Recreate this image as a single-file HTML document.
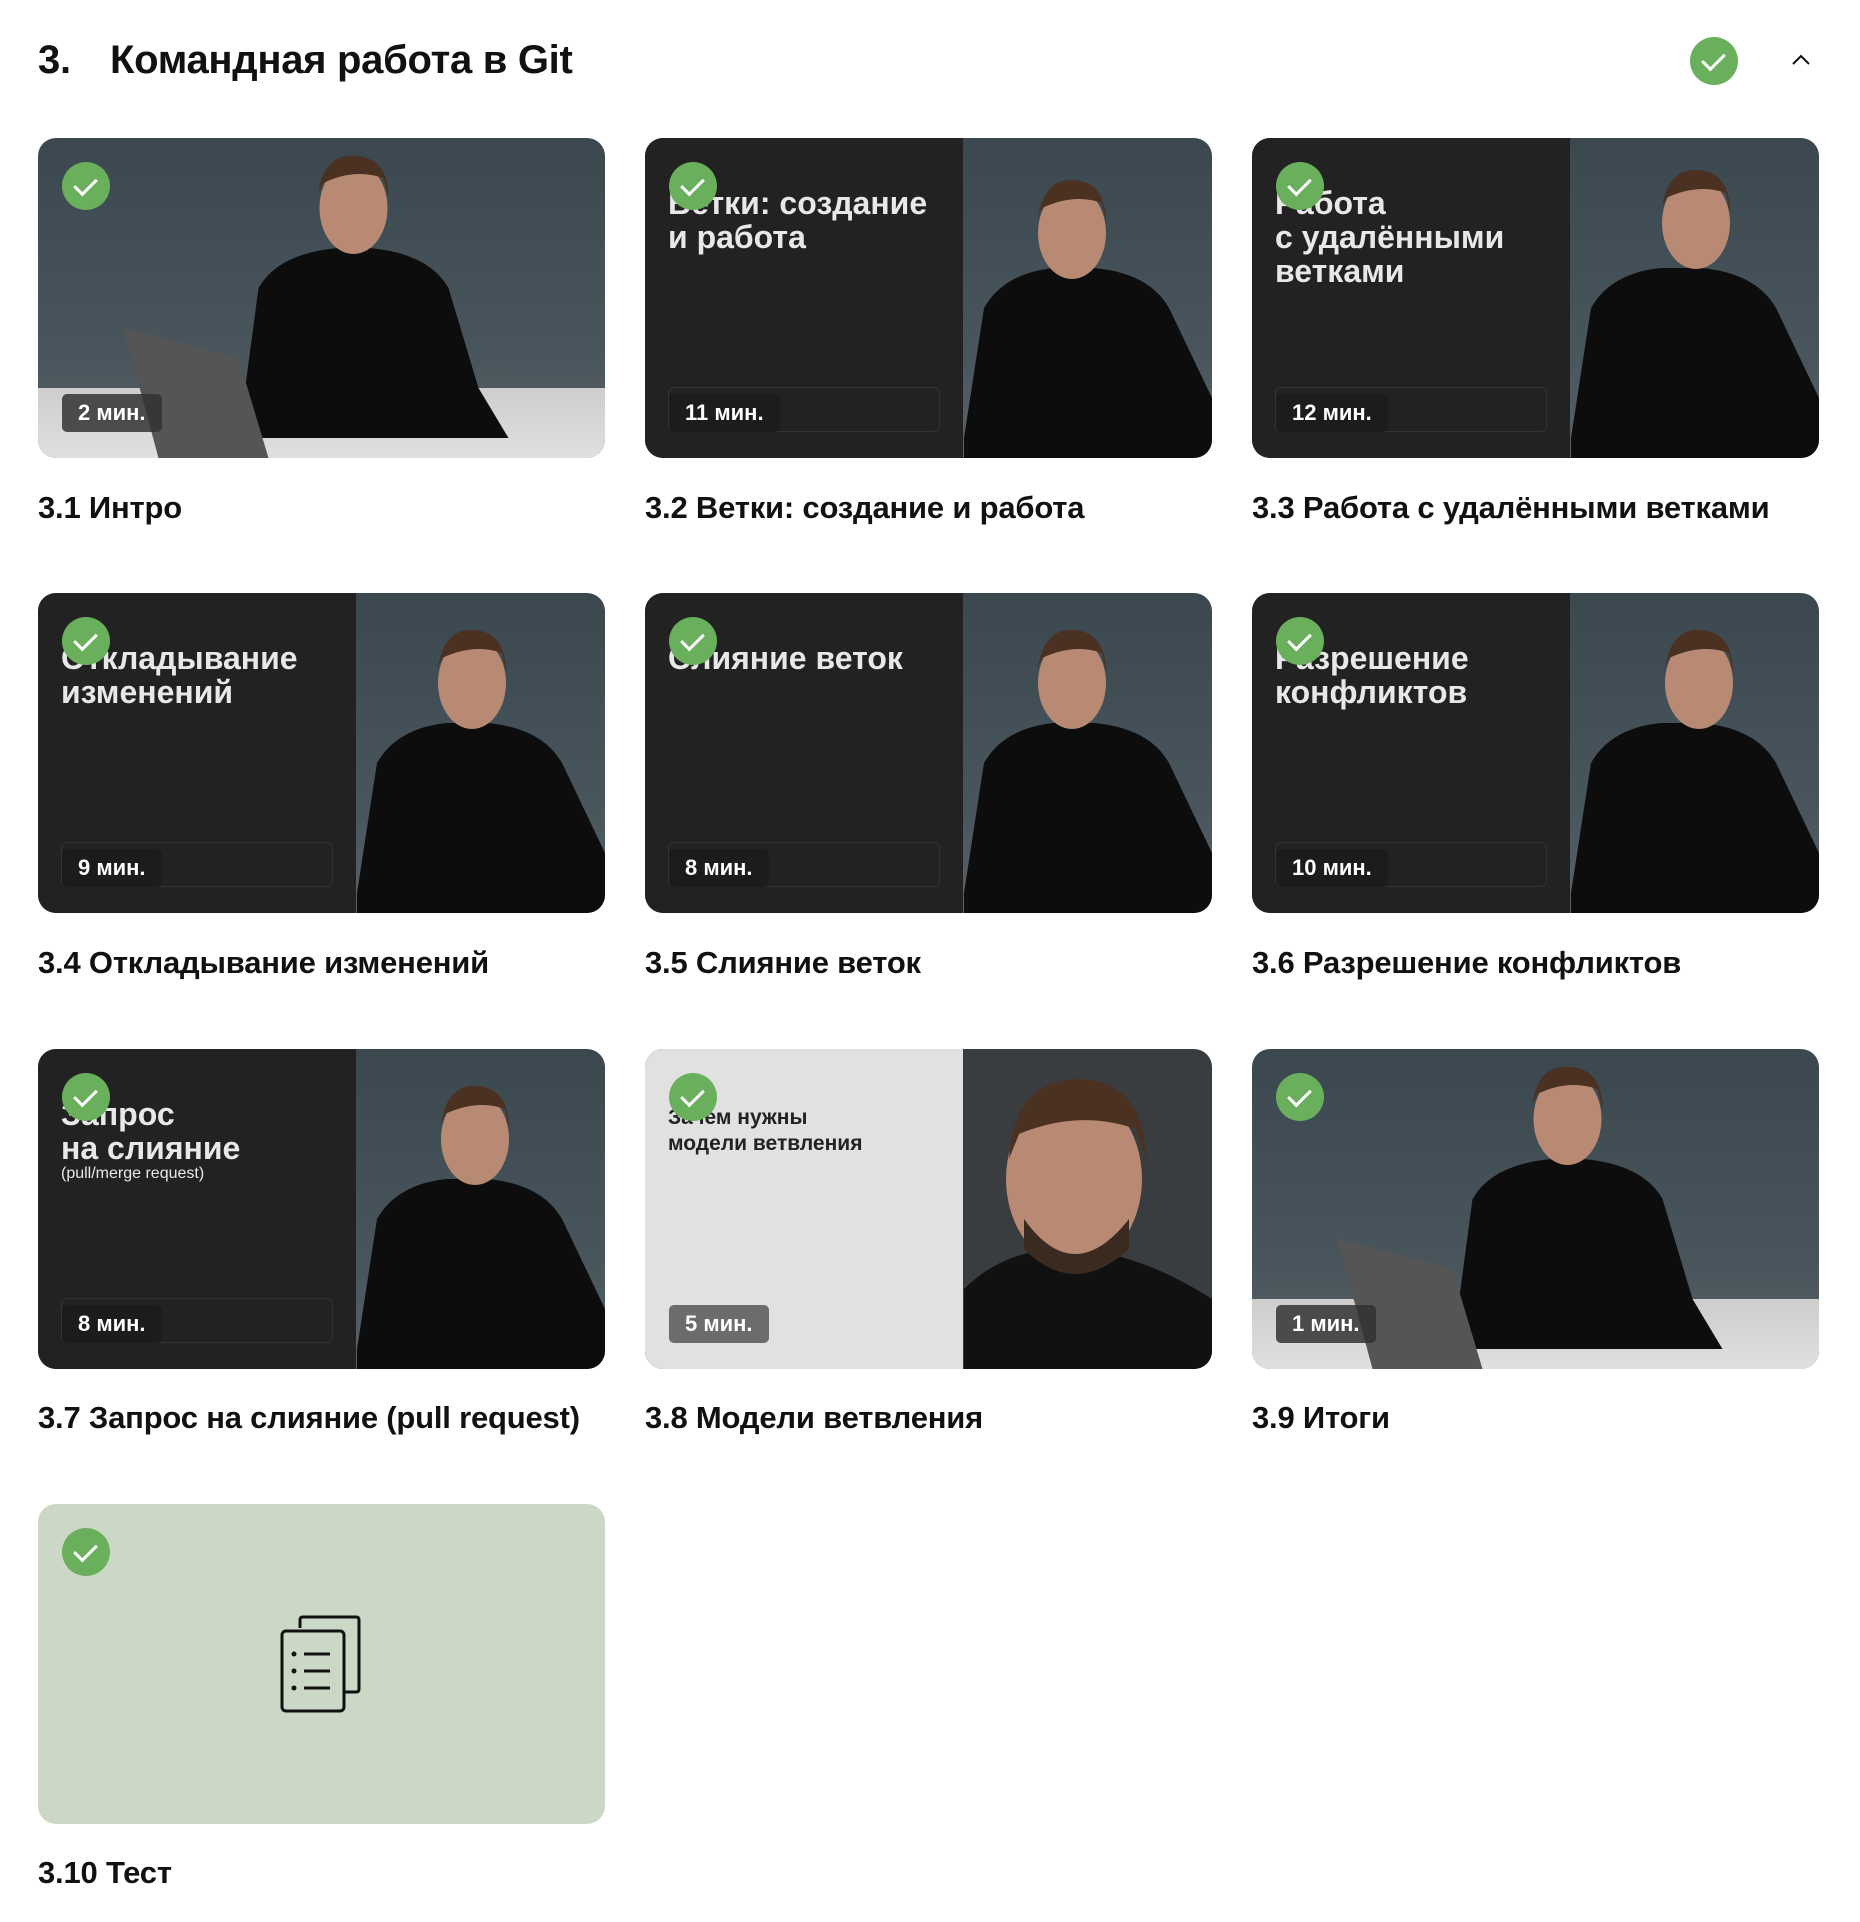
<!DOCTYPE html>
<html><head><meta charset="utf-8"><style>
*{margin:0;padding:0;box-sizing:border-box}
body{width:1860px;height:1922px;background:#fff;font-family:"Liberation Sans",sans-serif;color:#111;position:relative;overflow:hidden}
.h{position:absolute;left:38px;top:38px;font-size:40px;font-weight:700;letter-spacing:-0.3px}
.h span{display:inline-block;width:72px}
.chk{position:absolute;width:48px;height:48px;border-radius:50%;background:#6ab05c}
.chk:after{content:"";position:absolute;left:17px;top:11px;width:10px;height:19px;border:solid #fff;border-width:0 3px 3px 0;transform:rotate(45deg)}
.card{position:absolute;width:567px;height:320px;border-radius:18px;overflow:hidden;background:linear-gradient(180deg,#3c4850 0%,#4a565d 70%,#5a6368 100%)}
.card .c{left:24px;top:24px}
.left{position:absolute;left:0;top:0;width:318px;height:100%;background:#222}
.left.l{background:#e1e1e1}
.lt{position:absolute;left:23px;top:48px;color:#e8e8e8;font-size:32px;line-height:34px;font-weight:700}
.lbar{position:absolute;left:23px;top:249px;width:272px;height:45px;border:1px solid #333;border-radius:6px}
.dur{position:absolute;left:24px;top:256px;height:38px;padding:0 16px;border-radius:5px;background:rgba(50,50,50,.85);color:#fff;font-size:22px;line-height:38px;font-weight:700}
.t{position:absolute;font-size:31px;font-weight:700;letter-spacing:-0.2px}
.ph{position:absolute;top:0;right:0;height:100%}
.table{position:absolute;left:0;bottom:0;width:100%;height:70px;background:linear-gradient(#cfcdcb,#e2e0de)}
</style></head><body>
<div class="h"><span>3.</span>Командная работа в Git</div>
<div class="chk" style="left:1690px;top:37px"></div>
<svg style="position:absolute;left:1790px;top:52px" width="22" height="16"><path d="M3 12 L11 4 L19 12" stroke="#111" stroke-width="2" fill="none"/></svg>

<div class="card" style="left:38px;top:138px">
 <div class="table"></div>
 <svg class="ph" width="567" height="320" viewBox="0 0 566 320"><path d="M200 300 L220 150 Q240 115 300 110 L330 110 Q390 115 410 150 L440 250 L470 300 Z" fill="#0d0d0d"/><ellipse cx="315" cy="70" rx="34" ry="46" fill="#b88a74"/><path d="M280 55 Q285 15 318 18 Q350 20 350 60 L345 40 Q315 30 285 45Z" fill="#4a3122"/><path d="M85 190 L200 220 L230 320 L120 320 Z" fill="#555"/></svg>
 <div class="chk c"></div><div class="dur">2 мин.</div></div>
<div class="t" style="left:38px;top:490px">3.1 Интро</div>

<div class="card" style="left:645px;top:138px">
 <svg class="ph" width="248" height="320" viewBox="0 0 248 320"><path d="M0 300 L20 170 Q40 135 90 130 L130 130 Q185 135 205 170 L248 260 L248 320 L0 320Z" fill="#0d0d0d"/><ellipse cx="108" cy="95" rx="34" ry="46" fill="#b88a74"/><path d="M74 80 Q80 40 110 42 Q142 44 142 85 L138 65 Q110 55 78 70Z" fill="#4a3122"/></svg>
 <div class="left"><div class="lt">Ветки: создание<br>и работа</div><div class="lbar"></div></div>
 <div class="chk c"></div><div class="dur" style="background:#1c1c1c">11 мин.</div></div>
<div class="t" style="left:645px;top:490px">3.2 Ветки: создание и работа</div>

<div class="card" style="left:1252px;top:138px">
 <svg class="ph" width="248" height="320" viewBox="0 0 248 320"><path d="M0 300 L20 170 Q40 135 90 130 L130 130 Q185 135 205 170 L248 260 L248 320 L0 320Z" fill="#0d0d0d"/><ellipse cx="125" cy="85" rx="34" ry="46" fill="#b88a74"/><path d="M91 70 Q97 30 127 32 Q159 34 159 75 L155 55 Q127 45 95 60Z" fill="#4a3122"/></svg>
 <div class="left"><div class="lt">Работа<br>с удалёнными<br>ветками</div><div class="lbar"></div></div>
 <div class="chk c"></div><div class="dur" style="background:#1c1c1c">12 мин.</div></div>
<div class="t" style="left:1252px;top:490px">3.3 Работа с удалёнными ветками</div>

<div class="card" style="left:38px;top:593px">
 <svg class="ph" width="248" height="320" viewBox="0 0 248 320"><path d="M0 300 L20 170 Q40 135 90 130 L130 130 Q185 135 205 170 L248 260 L248 320 L0 320Z" fill="#0d0d0d"/><ellipse cx="115" cy="90" rx="34" ry="46" fill="#b88a74"/><path d="M81 75 Q87 35 117 37 Q149 39 149 80 L145 60 Q117 50 85 65Z" fill="#4a3122"/></svg>
 <div class="left"><div class="lt">Откладывание<br>изменений</div><div class="lbar"></div></div>
 <div class="chk c"></div><div class="dur" style="background:#1c1c1c">9 мин.</div></div>
<div class="t" style="left:38px;top:945px">3.4 Откладывание изменений</div>

<div class="card" style="left:645px;top:593px">
 <svg class="ph" width="248" height="320" viewBox="0 0 248 320"><path d="M0 300 L20 170 Q40 135 90 130 L130 130 Q185 135 205 170 L248 260 L248 320 L0 320Z" fill="#0d0d0d"/><ellipse cx="108" cy="90" rx="34" ry="46" fill="#b88a74"/><path d="M74 75 Q80 35 110 37 Q142 39 142 80 L138 60 Q110 50 78 65Z" fill="#4a3122"/></svg>
 <div class="left"><div class="lt">Слияние веток</div><div class="lbar"></div></div>
 <div class="chk c"></div><div class="dur" style="background:#1c1c1c">8 мин.</div></div>
<div class="t" style="left:645px;top:945px">3.5 Слияние веток</div>

<div class="card" style="left:1252px;top:593px">
 <svg class="ph" width="248" height="320" viewBox="0 0 248 320"><path d="M0 300 L20 170 Q40 135 90 130 L130 130 Q185 135 205 170 L248 260 L248 320 L0 320Z" fill="#0d0d0d"/><ellipse cx="128" cy="90" rx="34" ry="46" fill="#b88a74"/><path d="M94 75 Q100 35 130 37 Q162 39 162 80 L158 60 Q130 50 98 65Z" fill="#4a3122"/></svg>
 <div class="left"><div class="lt">Разрешение<br>конфликтов</div><div class="lbar"></div></div>
 <div class="chk c"></div><div class="dur" style="background:#1c1c1c">10 мин.</div></div>
<div class="t" style="left:1252px;top:945px">3.6 Разрешение конфликтов</div>

<div class="card" style="left:38px;top:1049px">
 <svg class="ph" width="248" height="320" viewBox="0 0 248 320"><path d="M0 300 L20 170 Q40 135 90 130 L130 130 Q185 135 205 170 L248 260 L248 320 L0 320Z" fill="#0d0d0d"/><ellipse cx="118" cy="90" rx="34" ry="46" fill="#b88a74"/><path d="M84 75 Q90 35 120 37 Q152 39 152 80 L148 60 Q120 50 88 65Z" fill="#4a3122"/></svg>
 <div class="left"><div class="lt">Запрос<br>на слияние<div style="font-size:16px;line-height:18px;font-weight:400">(pull/merge request)</div></div><div class="lbar"></div></div>
 <div class="chk c"></div><div class="dur" style="background:#1c1c1c">8 мин.</div></div>
<div class="t" style="left:38px;top:1400px">3.7 Запрос на слияние (pull request)</div>

<div class="card" style="left:645px;top:1049px;background:#3a3d40">
 <svg class="ph" width="248" height="320" viewBox="0 0 248 320"><path d="M0 320 L0 240 Q40 200 100 200 Q170 200 248 250 L248 320Z" fill="#111"/><ellipse cx="110" cy="130" rx="68" ry="88" fill="#b88a74"/><path d="M45 110 Q50 30 115 30 Q180 32 182 110 L172 80 Q115 60 55 85Z" fill="#4a3122"/><path d="M60 170 Q110 240 165 170 L165 200 Q110 250 60 200Z" fill="#3a2a20"/></svg>
 <div class="left l"><div class="lt" style="color:#222;font-size:21px;line-height:26px;top:56px">Зачем нужны<br>модели ветвления</div></div>
 <div class="chk c"></div><div class="dur" style="background:#6c6c6c">5 мин.</div></div>
<div class="t" style="left:645px;top:1400px">3.8 Модели ветвления</div>

<div class="card" style="left:1252px;top:1049px">
 <div class="table"></div>
 <svg class="ph" width="567" height="320" viewBox="0 0 566 320"><path d="M200 300 L220 150 Q240 115 300 110 L330 110 Q390 115 410 150 L440 250 L470 300 Z" fill="#0d0d0d"/><ellipse cx="315" cy="70" rx="34" ry="46" fill="#b88a74"/><path d="M280 55 Q285 15 318 18 Q350 20 350 60 L345 40 Q315 30 285 45Z" fill="#4a3122"/><path d="M85 190 L200 220 L230 320 L120 320 Z" fill="#555"/></svg>
 <div class="chk c"></div><div class="dur">1 мин.</div></div>
<div class="t" style="left:1252px;top:1400px">3.9 Итоги</div>

<div class="card" style="left:38px;top:1504px;background:#ccd8c6">
 <div class="chk c"></div>
 <svg style="position:absolute;left:240px;top:110px" width="90" height="100" viewBox="0 0 90 100"><path d="M22 14 V6 Q22 3 25 3 H78 Q81 3 81 6 V75 Q81 78 78 78 H67" stroke="#111" stroke-width="3" fill="none"/><rect x="4" y="17" width="62" height="80" rx="4" stroke="#111" stroke-width="3" fill="none"/><circle cx="16" cy="40" r="2.5" fill="#111"/><circle cx="16" cy="57" r="2.5" fill="#111"/><circle cx="16" cy="74" r="2.5" fill="#111"/><path d="M26 40 H52 M26 57 H52 M26 74 H52" stroke="#111" stroke-width="3"/></svg>
</div>
<div class="t" style="left:38px;top:1855px">3.10 Тест</div>
</body></html>
